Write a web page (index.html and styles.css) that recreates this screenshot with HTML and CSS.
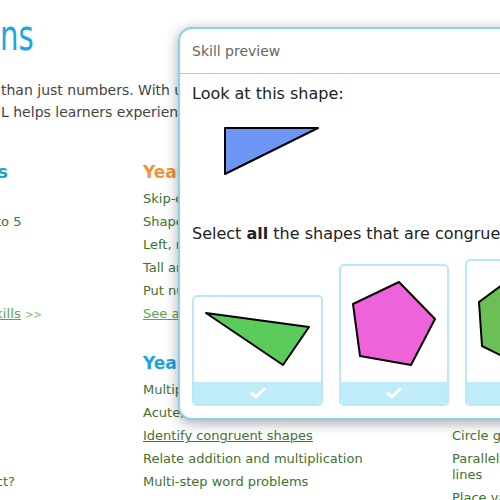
FILE: index.html
```html
<!DOCTYPE html>
<html lang="en">
<head>
<meta charset="utf-8">
<title>Skills</title>
<link rel="stylesheet" href="styles.css">
</head>
<body>
<div class="page">
  <h1 class="title"><span class="title-text">ns</span></h1>
  <p class="intro">
    <span class="line">than just numbers. With unlimited questions, engaging item types, and</span>
    <span class="line">L helps learners experience math at its most meaningful.</span>
  </p>
  <div class="skills">
    <section class="sec">
      <h2 class="head teal">Kindergarten skills</h2>
      <ul class="list">
        <li>Count to 3</li>
        <li>Count objects in a line up to 5</li>
        <li>Inside and outside</li>
        <li>Sort by shape</li>
        <li>Above and below</li>
        <li class="more"><a class="see wide">See all 25 Kindergarten skills</a> <span class="arr">&gt;&gt;</span></li>
      </ul>
    </section>
    <section class="sec">
      <h2 class="head orange">Year 1 skills</h2>
      <ul class="list">
        <li>Skip-counting by twos</li>
        <li>Shapes of everyday objects</li>
        <li>Left, middle and right</li>
        <li>Tall and short</li>
        <li>Put numbers in order</li>
        <li class="more"><a class="see">See all 40 Year 1 skills</a> <span class="arr">&gt;&gt;</span></li>
      </ul>
    </section>
    <section class="sec">
      <h2 class="head green">Year 2 skills</h2>
      <ul class="list">
        <li>Even or odd</li>
        <li>Fractions of shapes</li>
        <li>Flip, turn and slide</li>
        <li>Read a calendar</li>
        <li>Compare money</li>
        <li class="more"><a class="see">See all 38 Year 2 skills</a> <span class="arr">&gt;&gt;</span></li>
      </ul>
    </section>
    <section class="sec">
      <h2 class="head blue">Year 3</h2>
      <ul class="list">
        <li>Add tens</li>
        <li>Odd or even</li>
        <li>Half past</li>
        <li>Count coins</li>
        <li>Which subtraction is correct?</li>
      </ul>
    </section>
    <section class="sec">
      <h2 class="head blue">Year 4 skills</h2>
      <ul class="list">
        <li>Multiplication facts up to 10</li>
        <li>Acute, obtuse and right angles</li>
        <li><a class="under">Identify congruent shapes</a></li>
        <li>Relate addition and multiplication</li>
        <li>Multi-step word problems</li>
      </ul>
    </section>
    <section class="sec">
      <h2 class="head orange">Year 5 skills</h2>
      <ul class="list">
        <li>Prime or composite</li>
        <li>Volume of cubes</li>
        <li>Circle graphs</li>
        <li>Parallel and perpendicular lines</li>
        <li>Place value names</li>
      </ul>
    </section>
  </div>
</div>

<div class="dialog">
  <div class="dlg-head">Skill preview</div>
  <div class="dlg-body">
    <p class="q">Look at this shape:</p>
    <svg class="model" width="140" height="60" viewBox="0 0 140 60">
      <polygon points="33,8 126,8 33,54" fill="#6e97f5" stroke="#000" stroke-width="2" stroke-linejoin="round"/>
    </svg>
    <p class="q q2">Select <b>all</b> the shapes that are congruent to it.</p>
    <div class="cards">
      <div class="card c1">
        <svg class="shape" width="127" height="85" viewBox="0 0 127 85">
          <polygon points="12,16 115,30 89,68" fill="#5bcb5b" stroke="#000" stroke-width="2" stroke-linejoin="round"/>
        </svg>
        <div class="bar"><svg width="16" height="12" viewBox="0 0 16 12"><path d="M2 6.5 L6 10 L14 2" fill="none" stroke="#fff" stroke-width="3" stroke-linecap="round" stroke-linejoin="round"/></svg></div>
      </div>
      <div class="card c2">
        <svg class="shape" width="106" height="116" viewBox="0 0 106 116">
          <polygon points="58,16 94,53 70,99 19,90 12,38" fill="#ee62da" stroke="#000" stroke-width="2" stroke-linejoin="round"/>
        </svg>
        <div class="bar"><svg width="16" height="12" viewBox="0 0 16 12"><path d="M2 6.5 L6 10 L14 2" fill="none" stroke="#fff" stroke-width="3" stroke-linecap="round" stroke-linejoin="round"/></svg></div>
      </div>
      <div class="card c3">
        <svg class="shape" width="106" height="121" viewBox="0 0 106 121">
          <polygon points="12,41 15,85 55,105 95,80 92,30 54,10" fill="#6cbf55" stroke="#000" stroke-width="2" stroke-linejoin="round"/>
        </svg>
        <div class="bar"><svg width="16" height="12" viewBox="0 0 16 12"><path d="M2 6.5 L6 10 L14 2" fill="none" stroke="#fff" stroke-width="3" stroke-linecap="round" stroke-linejoin="round"/></svg></div>
      </div>
    </div>
  </div>
</div>
</body>
</html>
```
FILE: styles.css
```css
html, body {
  margin: 0;
  padding: 0;
}
body {
  width: 500px;
  height: 500px;
  overflow: hidden;
  position: relative;
  background: #fff;
  font-family: "DejaVu Sans", Verdana, sans-serif;
}
.page {
  width: 500px;
}
.title {
  margin: 12px 0 0;
  font-size: 43px;
  line-height: 46px;
  height: 46px;
  font-weight: normal;
  color: #1aa8e2;
}
.title-text {
  display: inline-block;
  transform: scaleX(0.68);
  transform-origin: 0 0;
}
.intro {
  margin: 21px 0 0;
  font-size: 14px;
  line-height: 22px;
  color: #444;
  white-space: nowrap;
}
.intro .line {
  display: block;
  padding-left: 1px;
}
.skills {
  margin: 37px 0 0 -174px;
  display: grid;
  grid-template-columns: 317px 309px 190px;
  row-gap: 21px;
}
.head {
  margin: 0;
  font-size: 17px;
  line-height: 24px;
  font-weight: bold;
  white-space: nowrap;
}
.teal { color: #1ba2c6; }
.orange { color: #f5913a; }
.blue { color: #1aa5e1; }
.green { color: #7bb63e; }
.list {
  list-style: none;
  margin: 7px 0 0;
  padding: 0;
  font-size: 13px;
  line-height: 16px;
  color: #3e7330;
}
.list li {
  margin-bottom: 7px;
}
.list li.more {
  margin-top: 3px;
  white-space: nowrap;
}
.see {
  color: #5ca844;
  text-decoration: underline;
}
.see.wide {
  letter-spacing: 0.2px;
}
.under {
  text-decoration: underline;
}
.arr {
  font-size: 10px;
  color: #7ab861;
}

.dialog {
  position: absolute;
  left: 178px;
  top: 27px;
  width: 380px;
  height: 389px;
  background: #fff;
  border: 2px solid #86d2ef;
  border-radius: 14px;
  box-shadow: 0 3px 14px rgba(0, 0, 0, 0.35);
  overflow: hidden;
}
.dlg-head {
  height: 44px;
  line-height: 44px;
  padding-left: 12px;
  font-size: 14px;
  color: #666;
  border-bottom: 1px solid #8fd5ef;
}
.dlg-body {
  padding: 10px 0 0 12px;
  color: #222;
}
.q {
  margin: 0;
  font-size: 16px;
  line-height: 20px;
  white-space: nowrap;
}
.model {
  display: block;
  margin-top: 16px;
}
.q2 {
  margin-top: 44px;
}
.cards {
  display: flex;
  align-items: flex-end;
  gap: 16px;
  margin-top: 15px;
}
.card {
  flex: none;
  display: flex;
  flex-direction: column;
  border: 2px solid #b9e9f8;
  border-radius: 5px;
  background: #fff;
  overflow: hidden;
}
.c1 { width: 127px; }
.c2 { width: 106px; }
.c3 { width: 106px; }
.shape {
  display: block;
}
.bar {
  height: 22px;
  background: #c0ecfa;
  display: flex;
  align-items: center;
  justify-content: center;
}
.bar svg {
  display: block;
}
```
